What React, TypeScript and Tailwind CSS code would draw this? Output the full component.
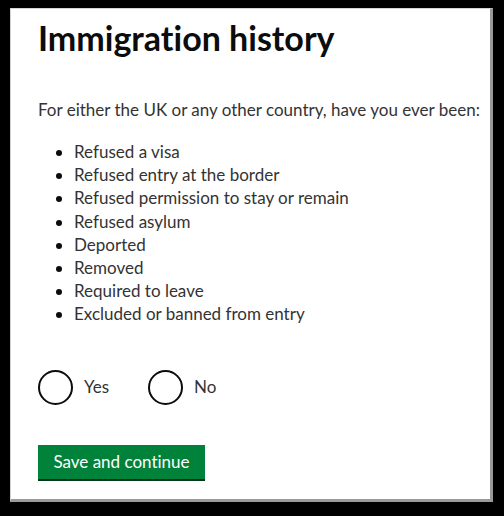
const reasons = [
  "Refused a visa",
  "Refused entry at the border",
  "Refused permission to stay or remain",
  "Refused asylum",
  "Deported",
  "Removed",
  "Required to leave",
  "Excluded or banned from entry",
];

function Radio({ label }: { label: string }) {
  return (
    <label className="flex items-center gap-[11px]">
      <span className="block h-[35px] w-[35px] rounded-full border-2 border-[#0b0c0c] bg-white" />
      <span className="text-[17px] text-[#333]">{label}</span>
    </label>
  );
}

export default function App() {
  return (
    <div className="min-h-[516px] bg-black pl-[10px] pt-[8px] font-['Lato','Liberation_Sans',sans-serif] [font-variant-ligatures:none]">
      <div className="h-[494px] w-[483px] border border-[#d4d4d4] border-r-[3px] border-b-[3px] border-r-[#9a9a9a] border-b-[#9a9a9a] bg-white pl-[27px] pt-[9px]">
        <h1 className="text-[34px] font-bold leading-[40px] text-[#0b0c0c]">Immigration history</h1>
        <p className="mt-[42px] text-[17px] leading-[20px] text-[#333]">
          For either the UK or any other country, have you ever been:
        </p>
        <ul className="mt-[20px] list-disc pl-[36px] text-[17px] leading-[23.2px] text-[#333] marker:text-[#0b0c0c]">
          {reasons.map((r) => (
            <li key={r}>{r}</li>
          ))}
        </ul>
        <div className="mt-[44px] flex gap-[39px]">
          <Radio label="Yes" />
          <Radio label="No" />
        </div>
        <button className="mt-[40px] block h-[34px] w-[167px] bg-[#00823b] text-[17px] text-white shadow-[0_2px_0_#003618]">
          Save and continue
        </button>
      </div>
    </div>
  );
}
